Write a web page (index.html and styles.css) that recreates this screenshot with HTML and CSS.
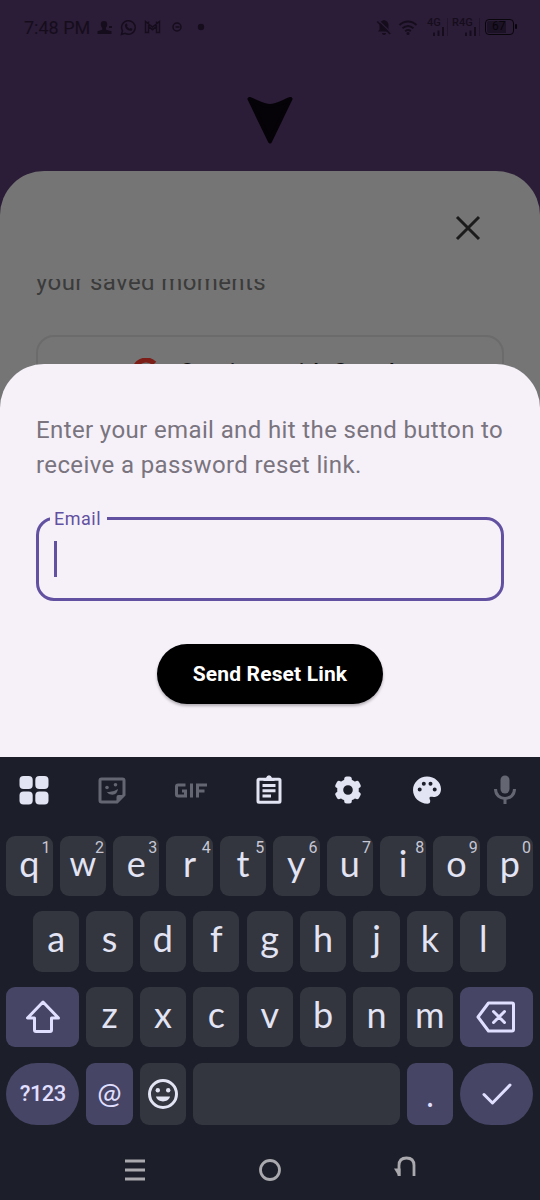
FILE: index.html
```html
<!DOCTYPE html>
<html lang="en">
<head>
<meta charset="utf-8">
<title>Reset password</title>
<link rel="stylesheet" href="styles.css">
</head>
<body>
<div class="phone">
  <div class="backdrop">
    <header class="status">
      <div class="status-left">
        <span class="clock">7:48 PM</span>
        <svg class="st-icon" width="16" height="16" viewBox="0 0 16 16"><path d="M7 2a3.200 3.200 0 0 1 3.200 3.200c0 1.700-.8 2.800-1.200 3.500v2l5.500 1.600V15H.5v-2.700l4.700-1.600v-2C4.600 8 3.800 6.900 3.800 5.200A3.200 3.200 0 0 1 7 2zM12 7h3v2h-3z"/></svg>
        <svg class="st-icon st-line" width="17" height="17" viewBox="0 0 17 17"><path d="M1.500 15.500l1-3.700a6.800 6.800 0 1 1 2.600 2.600z"/><path class="solid" d="M5.800 4.700c.5-.4 1-.3 1.200.2l.6 1.400-.6 1c.6 1.200 1.400 1.900 2.600 2.500l1-.9 1.800.9c.2 1.400-1 2.200-2.200 2-3-.5-5.200-2.800-5.300-5.400 0-.8.400-1.300.9-1.700z"/></svg>
        <svg class="st-icon st-line" width="17" height="14" viewBox="0 0 17 14"><path d="M1.500 12.500v-11l7 5.500 7-5.500v11h-3v-6l-4 3.200-4-3.200v6zM4.500 6V1.500M12.500 6V1.500"/></svg>
        <svg class="st-icon st-line" width="12" height="12" viewBox="0 0 12 12"><circle cx="6" cy="6" r="4"/><path d="M4.500 6h4"/></svg>
        <svg class="st-icon" width="8" height="8" viewBox="0 0 8 8"><circle cx="4" cy="4" r="3.200"/></svg>
      </div>
      <div class="status-right">
        <svg class="st-icon" width="16" height="17" viewBox="0 0 16 17"><path d="M8 1c2.800.5 4.500 2.400 4.500 5v4.500l1.500 2H2l1.500-2V6C3.500 3.400 5.200 1.500 8 1zM6 14h4c0 2.500-4 2.500-4 0z"/><path class="slash-gap" d="M2.500 1.500l13 12.500"/><path class="slash" d="M1.200 2.500l13 12.500"/></svg>
        <svg class="st-icon st-line wifi" width="20" height="17" viewBox="0 0 20 17"><path d="M1.500 6c5-4.800 12-4.800 17 0M4.500 9.300c3.500-3 7.500-3 11 0M7.200 12.200c2-1.500 3.800-1.500 5.600 0"/><circle class="solid" cx="10" cy="14.500" r="1.500"/></svg>
        <div class="net"><span>4G</span><svg width="15" height="9" viewBox="0 0 15 9"><path d="M1 5.500h2V9H1zM5.500 3.500h2V9h-2zM10 0h2v9h-2z"/></svg></div>
        <div class="net net-wide"><span>R4G</span><svg width="15" height="9" viewBox="0 0 15 9"><path d="M1 5.500h2V9H1zM5.500 3.500h2V9h-2zM10 0h2v9h-2z"/></svg></div>
        <div class="battery">67</div>
      </div>
    </header>
    <div class="brand">
      <svg width="48" height="50" viewBox="0 0 48 50"><path d="M3.500 3c7 2.500 14 7 20.500 7s13.500-4.500 20.500-7L24 45.500z"/></svg>
    </div>
    <section class="login">
      <div class="login-bar">
        <svg width="28" height="28" viewBox="0 0 28 28"><path d="M3 3l22 22M25 3L3 25"/></svg>
      </div>
      <div class="login-scroll">
        <p class="login-copy">your saved moments</p>
        <div class="google">
          <svg width="28" height="28" viewBox="0 0 28 28"><path class="g-red" d="M3 9.500A12 12 0 0 1 22.500 5.500"/><path class="g-blue" d="M14 14h11a11 11 0 0 1-4 9"/></svg>
          <span>Continue with Google</span>
        </div>
      </div>
    </section>
  </div>

  <main class="sheet">
    <p class="sheet-copy">Enter your email and hit the send button to receive a password reset link.</p>
    <fieldset class="field">
      <legend>Email</legend>
      <div class="caret"></div>
    </fieldset>
    <button class="send" type="button">Send Reset Link</button>
  </main>

  <section class="keyboard">
    <div class="tools">
      <svg viewBox="0 0 32 32"><g><rect x="1.500" y="2" width="13.200" height="13" rx="4"/><rect x="17.300" y="2" width="13.200" height="13" rx="4"/><rect x="1.500" y="17.500" width="13.200" height="13" rx="4"/><rect x="17.300" y="17.500" width="13.200" height="13" rx="4"/></g></svg>
      <svg class="dim" viewBox="0 0 32 32"><path class="line" d="M5.500 5h21q1.500 0 1.500 1.500V21l-7 7H5.500Q4 28 4 26.500v-20Q4 5 5.500 5z"/><path d="M20.500 28.500v-5.500q0-2 2-2H29z"/><circle cx="11" cy="13.500" r="1.800"/><circle cx="19.500" cy="10.800" r="1.800"/><path d="M10.500 17.800q6 1 11.500-2.800-.8 5.500-5.500 5.800-3.800.2-6-3z"/></svg>
      <svg class="dim" viewBox="0 0 32 32"><path class="gif" d="M10.500 11H3q-1.500 0-1.500 1.500v8Q1.500 22 3 22h7.500v-5H7M16.500 9.500v14M22.500 23.500V11H32M22.500 17h7"/></svg>
      <svg viewBox="0 0 32 32"><path class="line" d="M6 5.200h20q1 0 1 1v21q0 1-1 1H6q-1 0-1-1v-21q0-1 1-1z"/><path d="M10.500 7V4H13q.8-2.800 3-2.800T19 4h2.500v3z"/><path class="line" d="M9.500 11.500h13M9.500 16.800h13M9.500 22h8.500"/></svg>
      <svg viewBox="0 0 32 32"><g class="gear"><circle cx="16" cy="16" r="7.800"/><path d="M14.700 5h2.600v3h-2.600zM14.700 24h2.600v3h-2.600z"/><path transform="rotate(60 16 16)" d="M14.700 5h2.600v3h-2.600zM14.700 24h2.600v3h-2.600z"/><path transform="rotate(120 16 16)" d="M14.700 5h2.600v3h-2.600zM14.700 24h2.600v3h-2.600z"/></g></svg>
      <svg viewBox="0 0 32 32"><path fill-rule="evenodd" d="M16 2.500C23.500 2.500 30 8 30 15c0 5.500-3.500 8-7.500 8-2 0-3.700-.6-4 .8-.3 1.700 1.200 2 .6 4.200-.2 1-1.100 1.700-2.600 1.700C8.500 29.700 2 23.500 2 16S8.500 2.500 16 2.500zM8.700 13.500a2 2 0 1 0 0 4 2 2 0 0 0 0-4zM12.800 7.800a2 2 0 1 0 0 4 2 2 0 0 0 0-4zM19.500 7.800a2 2 0 1 0 0 4 2 2 0 0 0 0-4zM23.700 13.500a2 2 0 1 0 0 4 2 2 0 0 0 0-4z"/></svg>
      <svg class="dim" viewBox="0 0 32 32"><rect x="11.500" y="1.500" width="9" height="18" rx="4.500"/><path class="line" d="M6.500 15c0 12.500 19 12.500 19 0M16 24v6"/></svg>
    </div>
    <div class="row">
      <div class="key">q<sup>1</sup></div><div class="key key-w">w<sup>2</sup></div><div class="key">e<sup>3</sup></div><div class="key">r<sup>4</sup></div><div class="key">t<sup>5</sup></div><div class="key">y<sup>6</sup></div><div class="key">u<sup>7</sup></div><div class="key">i<sup>8</sup></div><div class="key">o<sup>9</sup></div><div class="key">p<sup>0</sup></div>
    </div>
    <div class="row row-home">
      <div class="key">a</div><div class="key">s</div><div class="key">d</div><div class="key">f</div><div class="key">g</div><div class="key">h</div><div class="key">j</div><div class="key">k</div><div class="key">l</div>
    </div>
    <div class="row">
      <div class="key wide accent"><svg width="36" height="34" viewBox="0 0 36 34"><path d="M18 2L2.500 18H9.500v12q0 1.500 1.500 1.500h14q1.500 0 1.500-1.500V18H33.500z"/></svg></div>
      <div class="key">z</div><div class="key">x</div><div class="key">c</div><div class="key">v</div><div class="key">b</div><div class="key">n</div><div class="key">m</div>
      <div class="key wide accent"><svg class="erase" width="40" height="34" viewBox="0 0 40 34"><path d="M12.500 3H36q1.500 0 1.500 1.500v25q0 1.500-1.500 1.500H12.500L2 17zM17.500 11.500l11 11M28.500 11.500l-11 11"/></svg></div>
    </div>
    <div class="row row-last">
      <div class="key wide accent round mode">?123</div>
      <div class="key accent at">@</div>
      <div class="key"><svg width="32" height="32" viewBox="0 0 32 32"><circle cx="16" cy="16" r="13.500"/><circle class="fill" cx="10.800" cy="12.200" r="2.200"/><circle class="fill" cx="21.200" cy="12.200" r="2.200"/><path class="fill" d="M9 18.500h14c-1.500 6.500-12.500 6.500-14 0z"/></svg></div>
      <div class="key space"></div>
      <div class="key accent dot">.</div>
      <div class="key wide accent round"><svg width="32" height="24" viewBox="0 0 32 24"><path d="M3 12.500l8.500 8.500L29 3"/></svg></div>
    </div>
    <nav class="nav">
      <svg viewBox="0 0 28 28"><path d="M4 5h20M4 14h20M4 23h20"/></svg>
      <svg viewBox="0 0 28 28"><circle cx="14" cy="14" r="9.500"/></svg>
      <svg viewBox="0 0 28 28"><path class="back" d="M8 20V9.500q0-7.500 7.500-7.500T23 9.500V20"/><path class="tip" d="M3 12.500h6.500V20H7.500z"/></svg>
    </nav>
  </section>
</div>
</body>
</html>
```
FILE: styles.css
```css
* { box-sizing: border-box; }
body { margin: 0; font-family: Roboto, sans-serif; }
p { margin: 0; }
svg { display: block; flex: none; }

.phone { width: 540px; height: 1200px; display: flex; flex-direction: column; overflow: hidden; background: #2b1c37; }

.backdrop { height: 410px; flex: none; display: flex; flex-direction: column; overflow: hidden; }
.status { height: 54px; flex: none; display: flex; justify-content: space-between; align-items: center; padding: 0 24px; color: #150d1c; }
.status-left, .status-right { display: flex; align-items: center; }
.clock { font-size: 18px; width: 66px; white-space: nowrap; }
.status-left .st-icon { margin-left: 7px; }
.status-left .st-icon:nth-child(5) { margin-left: 10px; }
.status-left .st-icon:nth-child(6) { margin-left: 14px; }
.status-right { gap: 6px; }
.st-icon, .net svg { fill: #150d1c; }
.st-line { fill: none; stroke: #150d1c; stroke-width: 1.500; }
.solid { fill: #150d1c; stroke: none; }
.slash { stroke: #150d1c; stroke-width: 1.500; }
.slash-gap { stroke: #2b1c37; stroke-width: 1.300; }
.wifi { stroke-width: 2; }
.net { width: 21px; height: 18px; margin-left: 3px; display: flex; flex-direction: column; align-items: flex-end; border-right: 1px solid #21152b; }
.net-wide { width: 28px; margin-left: -2px; }
.net span { width: 100%; font-size: 11px; font-weight: 500; line-height: 9px; white-space: nowrap; }
.battery { position: relative; width: 29px; height: 16px; margin: 0 2px 0 -1px; border: 1.500px solid #08050b; border-radius: 4px; background: #1c1225; background-clip: content-box; padding: 1px 7px 1px 1px; font-size: 12px; line-height: 11px; text-indent: 5px; color: #08050b; }
.battery::after { content: ""; position: absolute; right: -4px; top: 4px; width: 2px; height: 5px; background: #08050b; border-radius: 1px; }

.brand { height: 117px; flex: none; display: flex; justify-content: center; padding-top: 42px; }
.brand path { fill: #060308; stroke: #060308; stroke-width: 4; stroke-linejoin: round; }

.login { flex: 1; min-height: 0; background: #757575; border-radius: 44px 44px 0 0; display: flex; flex-direction: column; }
.login-bar { height: 108px; flex: none; display: flex; justify-content: flex-end; padding: 43px 58px 0 0; }
.login-bar path { fill: none; stroke: #1b1b1b; stroke-width: 3; }
.login-scroll { flex: 1; min-height: 0; overflow: hidden; padding: 0 36px; }
.login-copy { margin-top: -14px; height: 70px; font-size: 24px; line-height: 34px; letter-spacing: .38px; color: #3b3b3b; }
.google { height: 88px; border: 2px solid #6b6b6b; border-radius: 18px; display: flex; justify-content: center; padding-top: 19px; gap: 20px; font-size: 22px; font-weight: 500; line-height: 32px; letter-spacing: .9px; color: #101010; }
.google svg { margin-top: 2px; }
.g-red { fill: none; stroke: #7d1e18; stroke-width: 5; }
.g-blue { fill: none; stroke: #1f3f78; stroke-width: 5; }

.sheet { position: relative; height: 393px; flex: none; margin-top: -46px; padding: 49px 36px 0; background: #f6f0f9; border-radius: 44px 44px 0 0; display: flex; flex-direction: column; align-items: center; }
.sheet-copy { width: 475px; margin-right: -7px; font-size: 24px; line-height: 34.500px; letter-spacing: .38px; color: #79747e; }
.field { width: 468px; height: 92.500px; margin: 26.500px 0 0; padding: 12.500px 15px; border: 3px solid #6250a0; border-radius: 18px; }
.field legend { margin-left: -4px; padding: 0 6px 0 4px; font-size: 18px; line-height: 20px; letter-spacing: .5px; color: #6250a0; }
.caret { width: 3px; height: 36px; background: #6250a0; }
.send { width: 226px; height: 60px; margin: 42.500px 0 0; border: 0; border-radius: 30px; background: #000; color: #fff; font: 700 21px/60px Roboto, sans-serif; letter-spacing: .15px; padding: 0; box-shadow: 0 2px 3px rgba(0, 0, 0, .28); }

.keyboard { flex: 1; background: #1c1e29; display: flex; flex-direction: column; padding: 0 6.800px 0 6.200px; }
.tools { height: 66px; margin-bottom: 12.500px; flex: none; display: flex; justify-content: space-between; align-items: center; padding: 0 12px 0 11.500px; fill: #e2e3f3; stroke: none; }
.tools svg { width: 32px; height: 32px; }
.tools .dim { fill: #646672; }
.tools .line { fill: none; stroke: #e2e3f3; stroke-width: 3; }
.tools .dim .line, .tools .gif { fill: none; stroke: #646672; stroke-width: 3; }
.gear { stroke: #e2e3f3; stroke-linejoin: round; }
.gear circle { fill: none; stroke-width: 6; }
.gear path { stroke-width: 5; }
.row { height: 60.500px; margin-bottom: 15.200px; flex: none; display: flex; gap: 7.100px; justify-content: center; }
.row-last { height: 62.500px; margin-bottom: 0; }
.key { position: relative; width: 46.300px; flex: none; border-radius: 9px; background: #33353f; color: #e2e3f3; font: 400 36px/54px Lato, sans-serif; text-align: center; }
.key-w { font-size: 34px; }
.key sup { position: absolute; top: 4px; right: 2px; font: 400 16px/16px Roboto, sans-serif; color: #c6c7d4; }
.key svg { position: relative; margin: auto; fill: none; stroke: #e2e3f3; stroke-width: 3; stroke-linejoin: round; stroke-linecap: round; }
.wide { width: 73px; }
.accent { background: #474565; color: #e0dfff; }
.key.accent svg { stroke: #e0dfff; }
.key .erase { left: -1px; }
.key .fill { fill: #e2e3f3; stroke: none; }
.key:has(svg) { display: flex; align-items: center; }
.round { border-radius: 32px; }
.mode { font: 500 22px/62px Roboto, sans-serif; letter-spacing: -.6px; }
.at { font: 400 29px/60px Lato, sans-serif; }
.space { flex: 1; }
.dot { font-size: 32px; line-height: 64px; }
.nav { flex: 1; display: flex; justify-content: center; align-items: center; gap: 107px; padding-top: 14px; fill: none; stroke: #a9a9ae; stroke-width: 2.800; }
.nav svg { width: 28px; height: 28px; }
.tip { fill: #a9a9ae; stroke: none; }
```
